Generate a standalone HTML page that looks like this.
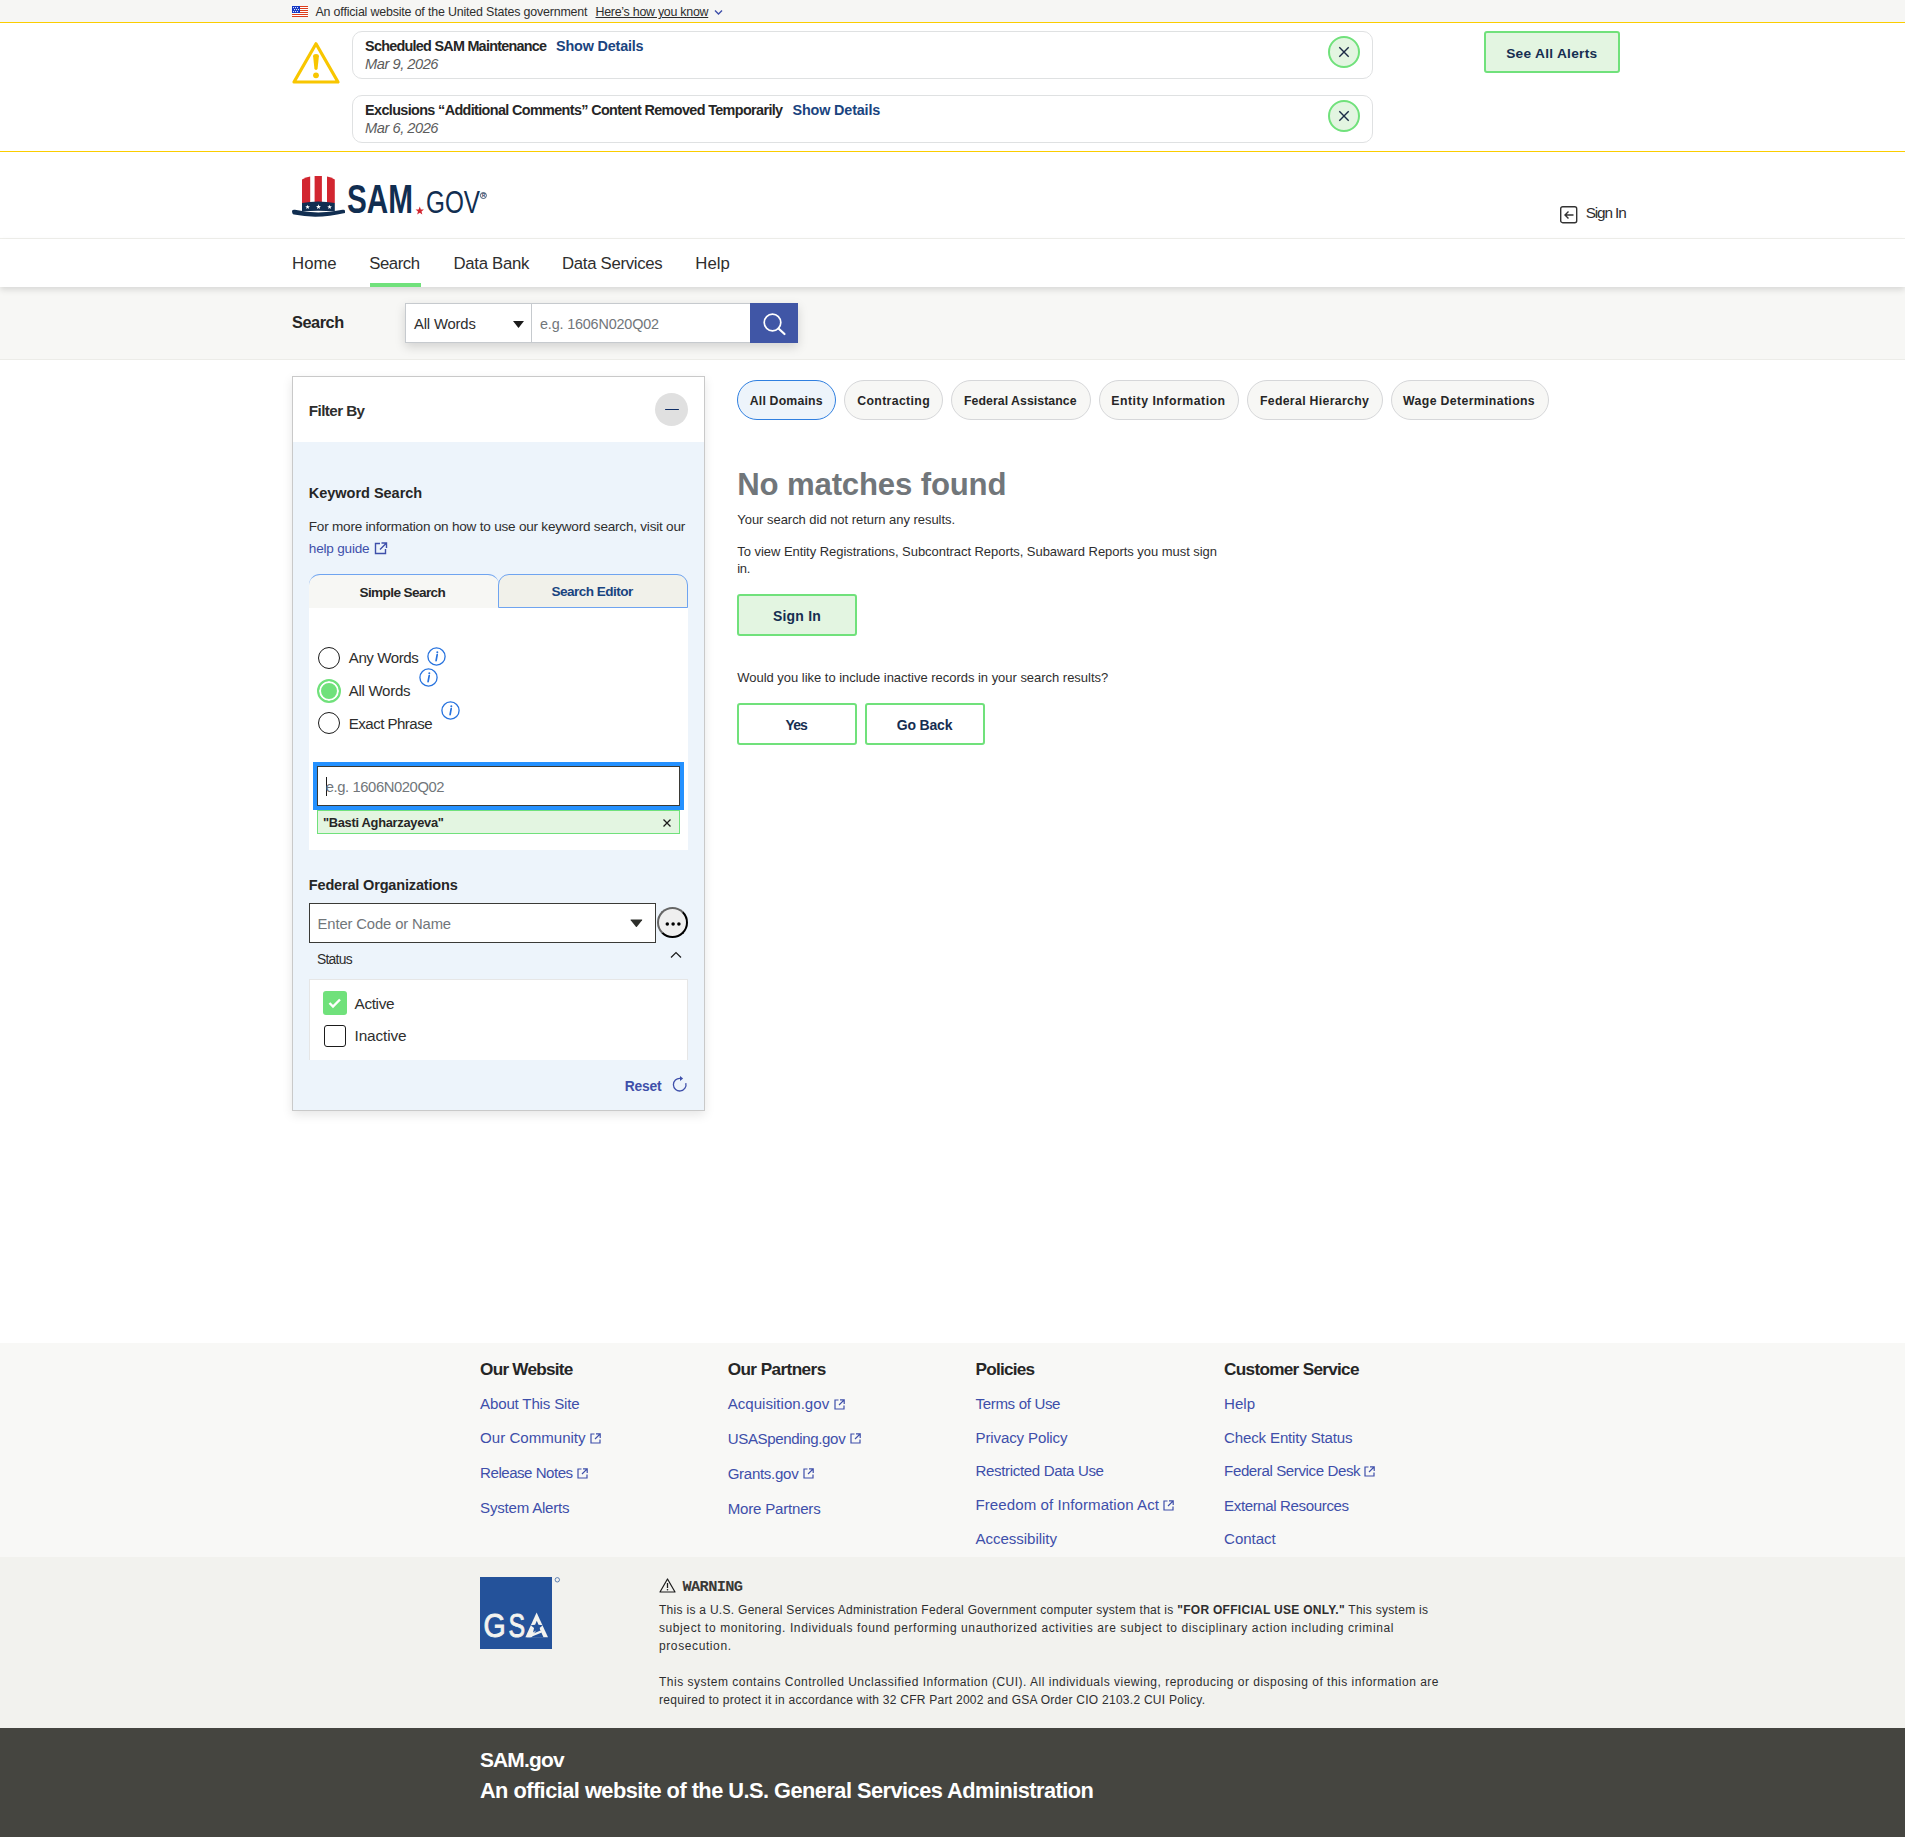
<!DOCTYPE html>
<html><head><meta charset="utf-8">
<style>
*{box-sizing:border-box;margin:0;padding:0}
html,body{width:1905px;height:1837px;overflow:hidden;background:#fff;font-family:"Liberation Sans",sans-serif;color:#1b1b1b}
.a{position:absolute}
.t{position:absolute;white-space:nowrap;line-height:1;z-index:5}
.card{left:352px;width:1021px;height:48px;border:1px solid #dfe1e2;border-radius:10px;background:#fff}
.xbtn{width:32px;height:32px;border-radius:50%;border:2px solid #70e17b;background:#e3f5e1}
.gbtn{background:#e3f5e1;border:2px solid #70e17b;border-radius:3px}
.obtn{background:#fff;border:2px solid #70e17b;border-radius:3px}
.pill{top:380px;height:40px;border-radius:20px;border:1px solid #d6d7d9;background:#f7f7f5}
</style></head><body>

<!-- gov banner -->
<div class="a" style="left:0;top:0;width:1905px;height:22px;background:#f6f6f4"></div>
<svg class="a" style="left:292px;top:6px" width="16" height="11" viewBox="0 0 16 11" shape-rendering="crispEdges"><rect width="16" height="11" fill="#fff"></rect><g fill="#dc3d1c"><rect y="0" width="16" height="1"></rect><rect y="2" width="16" height="1"></rect><rect y="4" width="16" height="1"></rect><rect y="6" width="16" height="1"></rect><rect y="8" width="16" height="1"></rect><rect y="10" width="16" height="1"></rect></g><rect width="8" height="7" fill="#1236c4"></rect><g fill="#fff" shape-rendering="auto"><circle cx="1.50" cy="1.6" r=".6"></circle><circle cx="3.50" cy="1.6" r=".6"></circle><circle cx="5.50" cy="1.6" r=".6"></circle><circle cx="2.50" cy="3.6" r=".6"></circle><circle cx="4.50" cy="3.6" r=".6"></circle><circle cx="6.50" cy="3.6" r=".6"></circle><circle cx="1.50" cy="5.6" r=".6"></circle><circle cx="3.50" cy="5.6" r=".6"></circle><circle cx="5.50" cy="5.6" r=".6"></circle></g></svg>
<svg class="a" style="left:714px;top:9px" width="9" height="7" viewBox="0 0 9 7"><path d="M1 1.5 L4.5 5 L8 1.5" stroke="#3e4faa" stroke-width="1.4" fill="none"></path></svg>

<!-- alerts -->
<div class="a" style="left:0;top:22px;width:1905px;height:130px;background:#fff;border-top:1px solid #fbcd00;border-bottom:1px solid #fbcd00"></div>
<svg class="a" style="left:291px;top:40px" width="50" height="46" viewBox="0 0 50 46">
  <path d="M25 3.8 L47 42 L3 42 Z" fill="none" stroke="#f8c600" stroke-width="3.2" stroke-linejoin="round"></path>
  <path d="M22.1 16.3 Q22.1 14 25 14 Q27.9 14 27.9 16.3 L26.6 28.6 Q26.4 29.9 25 29.9 Q23.6 29.9 23.4 28.6 Z" fill="#f8c600"></path>
  <circle cx="25" cy="35.3" r="2.9" fill="#f8c600"></circle>
</svg>
<div class="a card" style="top:31px"></div>
<div class="a card" style="top:95px"></div>
<div class="a xbtn" style="left:1328px;top:36px"><svg class="a" style="left:0;top:0" width="28" height="28" viewBox="0 0 28 28"><path d="M9.3 9.3 L18.7 18.7 M18.7 9.3 L9.3 18.7" stroke="#1c2b46" stroke-width="1.4"></path></svg></div>
<div class="a xbtn" style="left:1328px;top:100px"><svg class="a" style="left:0;top:0" width="28" height="28" viewBox="0 0 28 28"><path d="M9.3 9.3 L18.7 18.7 M18.7 9.3 L9.3 18.7" stroke="#1c2b46" stroke-width="1.4"></path></svg></div>
<div class="a gbtn" style="left:1484px;top:31px;width:136px;height:42px"></div>

<!-- header -->
<svg class="a" style="left:290px;top:174px" width="200" height="46" viewBox="0 0 200 46">
  <path d="M12 5.4 Q16 3.2 20.2 2.5 L20.2 29 L12 29 Z" fill="#d22630"></path>
  <path d="M24.6 2 L31.9 2 L31.9 29 L24.6 29 Z" fill="#d22630"></path>
  <path d="M37 2.5 Q41 3.2 44.8 5.4 L44.8 29 L37 29 Z" fill="#d22630"></path>
  <path d="M12 29 Q28 26 44.8 29 L44.8 37.5 Q28 36 12 37.5 Z" fill="#112e51"></path>
  <g fill="#fff"><path d="M17.60 30.70 L18.19 32.28 L19.88 32.36 L18.56 33.41 L19.01 35.04 L17.60 34.11 L16.19 35.04 L16.64 33.41 L15.32 32.36 L17.01 32.28 Z"></path><path d="M28.50 30.20 L29.14 31.92 L30.97 32.00 L29.54 33.14 L30.03 34.90 L28.50 33.89 L26.97 34.90 L27.46 33.14 L26.03 32.00 L27.86 31.92 Z"></path><path d="M39.60 30.70 L40.19 32.28 L41.88 32.36 L40.56 33.41 L41.01 35.04 L39.60 34.11 L38.19 35.04 L38.64 33.41 L37.32 32.36 L39.01 32.28 Z"></path></g>
  <path d="M2 36.8 Q3 35.3 5 35.8 Q28 41 52.5 35.8 Q55 35.3 55 37 L55 39 Q28 45.5 4 40.6 Q2 40.2 2 36.8 Z" fill="#112e51"></path>
  <text x="57" y="39" font-family="Liberation Sans" font-weight="bold" font-size="40" fill="#112e51" textLength="66" lengthAdjust="spacingAndGlyphs">SAM</text>
  <path d="M129.75 32.50 L130.84 35.42 L133.94 35.54 L131.50 37.46 L132.34 40.46 L129.75 38.75 L127.16 40.46 L128.00 37.46 L125.56 35.54 L128.66 35.42 Z" fill="#d22630"></path>
  <text x="136" y="39" font-family="Liberation Sans" font-size="31.5" fill="#112e51" textLength="54" lengthAdjust="spacingAndGlyphs">GOV</text>
  <circle cx="193.4" cy="21.5" r="3" fill="none" stroke="#112e51" stroke-width=".8"></circle>
  <text x="192" y="23.2" font-family="Liberation Sans" font-weight="bold" font-size="4.5" fill="#112e51">R</text>
</svg>
<svg class="a" style="left:1560px;top:206px" width="18" height="18" viewBox="0 0 18 18">
  <rect x=".7" y=".7" width="16" height="16" rx="2" fill="none" stroke="#333" stroke-width="1.4"></rect>
  <path d="M13.5 9 H5 M8.5 5.5 L5 9 L8.5 12.5" fill="none" stroke="#333" stroke-width="1.4"></path>
</svg>
<div class="a" style="left:0;top:238px;width:1905px;height:1px;background:#f0f0ec"></div>

<!-- nav -->
<div class="a" style="left:0;top:239px;width:1905px;height:48px;background:#fff;z-index:2;box-shadow:0 3px 6px rgba(0,0,0,0.12)"></div>
<div class="a" style="left:370px;top:283px;width:51px;height:4px;background:#70e17b;z-index:3"></div>

<!-- search bar -->
<div class="a" style="left:0;top:287px;width:1905px;height:73px;background:#f7f7f5;border-bottom:1px solid #ecece8"></div>
<div class="a" style="left:405px;top:303px;width:393px;height:40px;box-shadow:0 4px 10px rgba(0,0,0,0.15)"></div>
<div class="a" style="left:405px;top:303px;width:127px;height:40px;background:#fff;border:1px solid #c6cace"></div>
<svg class="a" style="left:513px;top:321px" width="12" height="8" viewBox="0 0 12 8"><path d="M0 0 H11 L5.5 7 Z" fill="#1b1b1b"></path></svg>
<div class="a" style="left:531px;top:303px;width:220px;height:40px;background:#fff;border:1px solid #c6cace"></div>
<div class="a" style="left:750px;top:303px;width:48px;height:40px;background:#4056a6"></div>
<svg class="a" style="left:760px;top:312px" width="28" height="24" viewBox="0 0 28 24">
  <circle cx="12.5" cy="10.5" r="8.3" fill="none" stroke="#fff" stroke-width="1.7"></circle>
  <path d="M18.5 16.5 L24.5 22" stroke="#fff" stroke-width="2.2" stroke-linecap="round"></path>
</svg>

<!-- filter panel -->
<div class="a" style="left:292px;top:376px;width:413px;height:735px;border:1px solid #c9c9c9;background:#edf4fb;box-shadow:0 4px 10px rgba(0,0,0,0.1)"></div>
<div class="a" style="left:293px;top:377px;width:411px;height:65px;background:#fff"></div>
<div class="a" style="left:655px;top:393px;width:33px;height:33px;border-radius:50%;background:#e0e0e0"></div>
<div class="a" style="left:665px;top:408.5px;width:14px;height:1.6px;border-radius:1px;background:#0f2e66"></div>
<svg class="a" style="left:374px;top:542px" width="14" height="13" viewBox="0 0 14 13">
  <path d="M6 1.5 H1.5 V11.5 H11.5 V7" fill="none" stroke="#3e4faa" stroke-width="1.4"></path>
  <path d="M7.5 1 H12.5 V6 M12.5 1 L6 7.5" fill="none" stroke="#3e4faa" stroke-width="1.4"></path>
</svg>
<!-- tabs -->
<div class="a" style="left:309px;top:574px;width:190px;height:34px;background:#f7f7f4;border-top:1px solid #6fa4f0;border-radius:11px 11px 0 0"></div>
<div class="a" style="left:498px;top:574px;width:190px;height:34px;background:#f1f1ea;border:1px solid #6fa4f0;border-radius:11px 11px 0 0"></div>
<div class="a" style="left:309px;top:608px;width:379px;height:242px;background:#fff"></div>
<!-- radios -->
<div class="a" style="left:318px;top:647px;width:22px;height:22px;border-radius:50%;border:1.5px solid #1b1b1b;background:#fff"></div>
<div class="a" style="left:317px;top:679px;width:24px;height:24px;border-radius:50%;border:2.5px solid #70e17b;background:#70e17b;box-shadow:inset 0 0 0 2px #fff"></div>
<div class="a" style="left:318px;top:712px;width:22px;height:22px;border-radius:50%;border:1.5px solid #1b1b1b;background:#fff"></div>
<svg class="a" style="left:427px;top:647px" width="19" height="19" viewBox="0 0 19 19"><circle cx="9.5" cy="9.5" r="8.6" fill="none" stroke="#2672de" stroke-width="1.3"></circle><circle cx="10.3" cy="5.3" r="1" fill="#2672de"></circle><path d="M10.2 7.6 L9.1 13.6" stroke="#2672de" stroke-width="1.7" stroke-linecap="round"></path></svg>
<svg class="a" style="left:419px;top:668px" width="19" height="19" viewBox="0 0 19 19"><circle cx="9.5" cy="9.5" r="8.6" fill="none" stroke="#2672de" stroke-width="1.3"></circle><circle cx="10.3" cy="5.3" r="1" fill="#2672de"></circle><path d="M10.2 7.6 L9.1 13.6" stroke="#2672de" stroke-width="1.7" stroke-linecap="round"></path></svg>
<svg class="a" style="left:441px;top:701px" width="19" height="19" viewBox="0 0 19 19"><circle cx="9.5" cy="9.5" r="8.6" fill="none" stroke="#2672de" stroke-width="1.3"></circle><circle cx="10.3" cy="5.3" r="1" fill="#2672de"></circle><path d="M10.2 7.6 L9.1 13.6" stroke="#2672de" stroke-width="1.7" stroke-linecap="round"></path></svg>
<!-- keyword input -->
<div class="a" style="left:313px;top:762px;width:371px;height:48px;background:#2491ff"></div>
<div class="a" style="left:317px;top:766px;width:363px;height:40px;background:#fff;border:1px solid #3a3a36"></div>
<div class="a" style="left:325.5px;top:777px;width:1px;height:19px;background:#1b1b1b"></div>
<div class="a" style="left:317px;top:810px;width:363px;height:24px;background:#e3f5e1;border:1px solid #70e17b"></div>
<svg class="a" style="left:662px;top:818px" width="10" height="10" viewBox="0 0 10 10"><path d="M1.5 1.5 L8.5 8.5 M8.5 1.5 L1.5 8.5" stroke="#1b1b1b" stroke-width="1.3"></path></svg>
<!-- fed orgs -->
<div class="a" style="left:309px;top:903px;width:347px;height:40px;background:#fff;border:1px solid #3a3a36"></div>
<svg class="a" style="left:629.5px;top:918.5px" width="13" height="9" viewBox="0 0 13 9"><path d="M1 .6 H11.8 Q12.6 .6 12.1 1.3 L6.9 7.8 Q6.4 8.4 5.9 7.8 L.7 1.3 Q.2 .6 1 .6 Z" fill="#2d2e2a"></path></svg>
<div class="a" style="left:657px;top:907px;width:31px;height:31px;border-radius:50%;border:2px solid;border-color:#666 #000 #000 #666;background:#efefef"></div>
<svg class="a" style="left:662px;top:919px" width="21" height="9" viewBox="0 0 21 9"><circle cx="5.3" cy="5.1" r="1.75" fill="#000"></circle><circle cx="11.1" cy="5.1" r="1.75" fill="#000"></circle><circle cx="16.9" cy="5.1" r="1.75" fill="#000"></circle></svg>
<svg class="a" style="left:670px;top:951px" width="12" height="8" viewBox="0 0 12 8"><path d="M1 6.5 L6 1.5 L11 6.5" fill="none" stroke="#1b1b1b" stroke-width="1.2"></path></svg>
<div class="a" style="left:309px;top:979px;width:379px;height:81px;background:#fff;border:1px solid #e6e6e6;border-bottom:none"></div>
<div class="a" style="left:323px;top:991px;width:24px;height:24px;border-radius:3px;background:#70e17b"></div>
<svg class="a" style="left:327px;top:996px" width="16" height="14" viewBox="0 0 16 14"><path d="M2.5 7 L6 10.5 L13 3.5" fill="none" stroke="#fff" stroke-width="2.4"></path></svg>
<div class="a" style="left:324px;top:1025px;width:22px;height:22px;border-radius:3px;border:1.5px solid #1b1b1b;background:#fff"></div>
<svg class="a" style="left:671px;top:1075px" width="18" height="18" viewBox="0 0 18 18"><path d="M14.8 8.1 A6.3 6.3 0 1 1 9.3 3.42" fill="none" stroke="#3e4faa" stroke-width="1.3"></path><path d="M9 1.1 L12.1 3.4 L9 5.9 Z" fill="#3e4faa"></path></svg>

<!-- results -->
<div class="a pill" style="left:737px;width:99px;border:1.5px solid #2f7fe0;background:#edf4fb"></div>
<div class="a pill" style="left:844px;width:99px"></div>
<div class="a pill" style="left:951px;width:140px"></div>
<div class="a pill" style="left:1099px;width:140px"></div>
<div class="a pill" style="left:1247px;width:136px"></div>
<div class="a pill" style="left:1391px;width:158px"></div>
<div class="a gbtn" style="left:737px;top:594px;width:120px;height:42px"></div>
<div class="a obtn" style="left:737px;top:703px;width:120px;height:42px"></div>
<div class="a obtn" style="left:865px;top:703px;width:120px;height:42px"></div>

<!-- footer -->
<div class="a" style="left:0;top:1343px;width:1905px;height:214px;background:#f8f8f6"></div>
<div class="a" style="left:0;top:1557px;width:1905px;height:171px;background:#f2f2ee"></div>
<div class="a" style="left:0;top:1728px;width:1905px;height:109px;background:#454540"></div>
<svg class="a" style="left:589.5px;top:1432.5px" width="11" height="11" viewBox="0 0 11 11"><path d="M4.5 1 H1 V10 H10 V6.5" fill="none" stroke="#3e4faa" stroke-width="1.2"></path><path d="M6 .8 H10.2 V5 M10.2 .8 L5 6" fill="none" stroke="#3e4faa" stroke-width="1.2"></path></svg>
<svg class="a" style="left:576.5px;top:1467.5px" width="11" height="11" viewBox="0 0 11 11"><path d="M4.5 1 H1 V10 H10 V6.5" fill="none" stroke="#3e4faa" stroke-width="1.2"></path><path d="M6 .8 H10.2 V5 M10.2 .8 L5 6" fill="none" stroke="#3e4faa" stroke-width="1.2"></path></svg>
<svg class="a" style="left:833.5px;top:1398.5px" width="11" height="11" viewBox="0 0 11 11"><path d="M4.5 1 H1 V10 H10 V6.5" fill="none" stroke="#3e4faa" stroke-width="1.2"></path><path d="M6 .8 H10.2 V5 M10.2 .8 L5 6" fill="none" stroke="#3e4faa" stroke-width="1.2"></path></svg>
<svg class="a" style="left:850px;top:1433px" width="11" height="11" viewBox="0 0 11 11"><path d="M4.5 1 H1 V10 H10 V6.5" fill="none" stroke="#3e4faa" stroke-width="1.2"></path><path d="M6 .8 H10.2 V5 M10.2 .8 L5 6" fill="none" stroke="#3e4faa" stroke-width="1.2"></path></svg>
<svg class="a" style="left:803px;top:1468px" width="11" height="11" viewBox="0 0 11 11"><path d="M4.5 1 H1 V10 H10 V6.5" fill="none" stroke="#3e4faa" stroke-width="1.2"></path><path d="M6 .8 H10.2 V5 M10.2 .8 L5 6" fill="none" stroke="#3e4faa" stroke-width="1.2"></path></svg>
<svg class="a" style="left:1162.5px;top:1499.5px" width="11" height="11" viewBox="0 0 11 11"><path d="M4.5 1 H1 V10 H10 V6.5" fill="none" stroke="#3e4faa" stroke-width="1.2"></path><path d="M6 .8 H10.2 V5 M10.2 .8 L5 6" fill="none" stroke="#3e4faa" stroke-width="1.2"></path></svg>
<svg class="a" style="left:1364px;top:1466px" width="11" height="11" viewBox="0 0 11 11"><path d="M4.5 1 H1 V10 H10 V6.5" fill="none" stroke="#3e4faa" stroke-width="1.2"></path><path d="M6 .8 H10.2 V5 M10.2 .8 L5 6" fill="none" stroke="#3e4faa" stroke-width="1.2"></path></svg>

<svg class="a" style="left:480px;top:1577px" width="84" height="73" viewBox="0 0 84 73">
  <rect x="0" y="0" width="72" height="72" fill="#24529a"></rect>
  <text x="3.6" y="60.3" font-family="Liberation Sans" font-size="34" fill="#f3f3ef" stroke="#f3f3ef" stroke-width="0.9" textLength="22.2" lengthAdjust="spacingAndGlyphs">G</text>
  <text x="28.4" y="60.3" font-family="Liberation Sans" font-size="34" fill="#f3f3ef" stroke="#f3f3ef" stroke-width="0.9" textLength="16.6" lengthAdjust="spacingAndGlyphs">S</text>
  <path d="M56.6 35.5 L68 60.3 L45.4 60.3 Z" fill="#f3f3ef"></path>
  <path d="M51.5 60.4 L63.6 60.4 L58.6 49.5 Z" fill="#24529a"></path>
  <path d="M56.80 43.80 L58.50 47.85 L62.89 48.22 L59.56 51.10 L60.56 55.38 L56.80 53.10 L53.04 55.38 L54.04 51.10 L50.71 48.22 L55.10 47.85 Z" fill="#24529a"></path>
  <path d="M46.5 60.3 Q53 56.5 60.5 53.6 L61.8 55.5 Q54 58.5 50.5 60.3 Z" fill="#f3f3ef"></path>
  <circle cx="77.3" cy="2.8" r="2.2" fill="none" stroke="#24529a" stroke-width=".7"></circle>
</svg>
<svg class="a" style="left:659px;top:1578px" width="17" height="15" viewBox="0 0 17 15"><path d="M8.5 1 L16 14 H1 Z" fill="none" stroke="#1b1b1b" stroke-width="1.2" stroke-linejoin="round"></path><path d="M8.5 5 V10" stroke="#1b1b1b" stroke-width="1.3"></path><circle cx="8.5" cy="11.8" r=".8" fill="#1b1b1b"></circle></svg>

<div class="t" style="left: 315.5px; top: 6px; font-size: 12.43px; color: rgb(46, 46, 46); letter-spacing: -0.176px;">An official website of the United States government</div>
<div class="t" style="left: 595.5px; top: 6px; font-size: 12.43px; color: rgb(46, 46, 46); text-decoration: underline; letter-spacing: -0.269px;">Here’s how you know</div>
<div class="t" style="left: 365.1px; top: 39px; font-size: 14.39px; font-weight: bold; color: rgb(38, 38, 38); letter-spacing: -0.738px;">Scheduled SAM Maintenance</div>
<div class="t" style="left: 556.1px; top: 39px; font-size: 14.39px; font-weight: bold; color: rgb(26, 68, 128); letter-spacing: -0.179px;">Show Details</div>
<div class="t" style="left: 365.1px; top: 57px; font-size: 14.66px; font-style: italic; color: rgb(92, 92, 92); letter-spacing: -0.482px;">Mar 9, 2026</div>
<div class="t" style="left: 365.1px; top: 103px; font-size: 14.39px; font-weight: bold; color: rgb(38, 38, 38); letter-spacing: -0.627px;">Exclusions “Additional Comments” Content Removed Temporarily</div>
<div class="t" style="left: 792.5px; top: 103px; font-size: 14.39px; font-weight: bold; color: rgb(26, 68, 128); letter-spacing: -0.152px;">Show Details</div>
<div class="t" style="left: 365.1px; top: 121px; font-size: 14.66px; font-style: italic; color: rgb(92, 92, 92); letter-spacing: -0.482px;">Mar 6, 2026</div>
<div class="t" style="left: 1506.2px; top: 47px; font-size: 13.69px; font-weight: bold; color: rgb(22, 46, 81); letter-spacing: 0.29px;">See All Alerts</div>
<div class="t" style="left: 1585.7px; top: 205px; font-size: 15.36px; color: rgb(46, 46, 46); letter-spacing: -1.138px;">Sign In</div>
<div class="t" style="left: 292.1px; top: 256px; font-size: 16.76px; color: rgb(46, 46, 46); letter-spacing: -0.029px;">Home</div>
<div class="t" style="left: 369.3px; top: 256px; font-size: 16.76px; color: rgb(46, 46, 46); letter-spacing: -0.476px;">Search</div>
<div class="t" style="left: 453.4px; top: 256px; font-size: 16.76px; color: rgb(46, 46, 46); letter-spacing: -0.277px;">Data Bank</div>
<div class="t" style="left: 562px; top: 256px; font-size: 16.76px; color: rgb(46, 46, 46); letter-spacing: -0.297px;">Data Services</div>
<div class="t" style="left: 695.3px; top: 256px; font-size: 16.76px; color: rgb(46, 46, 46); letter-spacing: 0.049px;">Help</div>
<div class="t" style="left: 292px; top: 314px; font-size: 16.34px; font-weight: bold; color: rgb(38, 38, 38); letter-spacing: -0.454px;">Search</div>
<div class="t" style="left: 414px; top: 317px; font-size: 14.8px; color: rgb(46, 46, 46); letter-spacing: -0.156px;">All Words</div>
<div class="t" style="left: 540px; top: 317px; font-size: 14.39px; color: rgb(113, 118, 122); letter-spacing: -0.167px;">e.g. 1606N020Q02</div>
<div class="t" style="left: 308.8px; top: 403px; font-size: 15.22px; color: rgb(46, 46, 46); font-weight: 600; letter-spacing: -0.586px;">Filter By</div>
<div class="t" style="left: 308.8px; top: 486px; font-size: 14.53px; font-weight: bold; color: rgb(38, 38, 38); letter-spacing: -0.028px;">Keyword Search</div>
<div class="t" style="left: 308.8px; top: 520px; font-size: 13.55px; color: rgb(46, 46, 46); letter-spacing: -0.215px;">For more information on how to use our keyword search, visit our</div>
<div class="t" style="left: 308.8px; top: 542px; font-size: 13.55px; color: rgb(62, 79, 170); letter-spacing: -0.192px;">help guide</div>
<div class="t" style="left: 359.5px; top: 586px; font-size: 13.55px; font-weight: bold; color: rgb(38, 38, 38); letter-spacing: -0.59px;">Simple Search</div>
<div class="t" style="left: 551.5px; top: 585px; font-size: 13.55px; font-weight: bold; color: rgb(26, 68, 128); letter-spacing: -0.524px;">Search Editor</div>
<div class="t" style="left: 348.8px; top: 650px; font-size: 15.08px; color: rgb(46, 46, 46); letter-spacing: -0.434px;">Any Words</div>
<div class="t" style="left: 348.8px; top: 683px; font-size: 15.08px; color: rgb(46, 46, 46); letter-spacing: -0.319px;">All Words</div>
<div class="t" style="left: 348.8px; top: 716px; font-size: 15.08px; color: rgb(46, 46, 46); letter-spacing: -0.535px;">Exact Phrase</div>
<div class="t" style="left: 325.7px; top: 780px; font-size: 14.8px; color: rgb(113, 118, 122); letter-spacing: -0.411px;">e.g. 1606N020Q02</div>
<div class="t" style="left: 322.9px; top: 817px; font-size: 12.85px; font-weight: bold; color: rgb(38, 38, 38); letter-spacing: -0.274px;">"Basti Agharzayeva"</div>
<div class="t" style="left: 308.8px; top: 878px; font-size: 14.53px; font-weight: bold; color: rgb(38, 38, 38); letter-spacing: -0.173px;">Federal Organizations</div>
<div class="t" style="left: 317.6px; top: 917px; font-size: 14.8px; color: rgb(113, 118, 122); letter-spacing: -0.13px;">Enter Code or Name</div>
<div class="t" style="left: 316.9px; top: 953px; font-size: 13.83px; color: rgb(46, 46, 46); letter-spacing: -0.681px;">Status</div>
<div class="t" style="left: 354.5px; top: 996px; font-size: 15.36px; color: rgb(46, 46, 46); letter-spacing: -0.366px;">Active</div>
<div class="t" style="left: 354.5px; top: 1028px; font-size: 15.36px; color: rgb(46, 46, 46); letter-spacing: -0.134px;">Inactive</div>
<div class="t" style="left: 624.8px; top: 1080px; font-size: 13.83px; font-weight: bold; color: rgb(62, 79, 170); letter-spacing: -0.193px;">Reset</div>
<div class="t" style="left: 749.8px; top: 395px; font-size: 12.29px; font-weight: bold; color: rgb(38, 38, 38); letter-spacing: 0.172px;">All Domains</div>
<div class="t" style="left: 857.2px; top: 395px; font-size: 12.29px; font-weight: bold; color: rgb(38, 38, 38); letter-spacing: 0.358px;">Contracting</div>
<div class="t" style="left: 964px; top: 395px; font-size: 12.29px; font-weight: bold; color: rgb(38, 38, 38); letter-spacing: 0.059px;">Federal Assistance</div>
<div class="t" style="left: 1111.3px; top: 395px; font-size: 12.29px; font-weight: bold; color: rgb(38, 38, 38); letter-spacing: 0.513px;">Entity Information</div>
<div class="t" style="left: 1259.9px; top: 395px; font-size: 12.29px; font-weight: bold; color: rgb(38, 38, 38); letter-spacing: 0.327px;">Federal Hierarchy</div>
<div class="t" style="left: 1403.1px; top: 395px; font-size: 12.29px; font-weight: bold; color: rgb(38, 38, 38); letter-spacing: 0.361px;">Wage Determinations</div>
<div class="t" style="left: 737.3px; top: 469px; font-size: 31.15px; font-weight: bold; color: rgb(113, 118, 122); letter-spacing: -0.163px;">No matches found</div>
<div class="t" style="left: 737.3px; top: 513px; font-size: 12.99px; color: rgb(46, 46, 46); letter-spacing: -0.03px;">Your search did not return any results.</div>
<div class="t" style="left: 737.3px; top: 545px; font-size: 12.99px; color: rgb(46, 46, 46); letter-spacing: -0.039px;">To view Entity Registrations, Subcontract Reports, Subaward Reports you must sign</div>
<div class="t" style="left: 737.3px; top: 562px; font-size: 12.99px; color: rgb(46, 46, 46); letter-spacing: -0.359px;">in.</div>
<div class="t" style="left: 773px; top: 610px; font-size: 13.97px; font-weight: bold; color: rgb(22, 46, 81); letter-spacing: 0.206px;">Sign In</div>
<div class="t" style="left: 737.3px; top: 671px; font-size: 12.99px; color: rgb(46, 46, 46); letter-spacing: -0.02px;">Would you like to include inactive records in your search results?</div>
<div class="t" style="left: 785.5px; top: 719px; font-size: 13.97px; font-weight: bold; color: rgb(22, 46, 81); letter-spacing: -0.847px;">Yes</div>
<div class="t" style="left: 896.7px; top: 719px; font-size: 13.97px; font-weight: bold; color: rgb(22, 46, 81); letter-spacing: -0.148px;">Go Back</div>
<div class="t" style="left: 480.1px; top: 1361px; font-size: 17.18px; font-weight: bold; color: rgb(38, 38, 38); letter-spacing: -0.763px;">Our Website</div>
<div class="t" style="left: 727.7px; top: 1361px; font-size: 17.18px; font-weight: bold; color: rgb(38, 38, 38); letter-spacing: -0.589px;">Our Partners</div>
<div class="t" style="left: 975.5px; top: 1361px; font-size: 17.18px; font-weight: bold; color: rgb(38, 38, 38); letter-spacing: -0.772px;">Policies</div>
<div class="t" style="left: 1224.1px; top: 1361px; font-size: 17.18px; font-weight: bold; color: rgb(38, 38, 38); letter-spacing: -0.709px;">Customer Service</div>
<div class="t" style="left: 480.1px; top: 1396px; font-size: 15.08px; color: rgb(62, 79, 170); letter-spacing: -0.177px;">About This Site</div>
<div class="t" style="left: 480.1px; top: 1430px; font-size: 15.08px; color: rgb(62, 79, 170); letter-spacing: -0.007px;">Our Community</div>
<div class="t" style="left: 480.1px; top: 1465px; font-size: 15.08px; color: rgb(62, 79, 170); letter-spacing: -0.492px;">Release Notes</div>
<div class="t" style="left: 480.1px; top: 1500px; font-size: 15.08px; color: rgb(62, 79, 170); letter-spacing: -0.223px;">System Alerts</div>
<div class="t" style="left: 727.7px; top: 1396px; font-size: 15.08px; color: rgb(62, 79, 170); letter-spacing: 0.006px;">Acquisition.gov</div>
<div class="t" style="left: 727.7px; top: 1431px; font-size: 15.08px; color: rgb(62, 79, 170); letter-spacing: -0.374px;">USASpending.gov</div>
<div class="t" style="left: 727.7px; top: 1466px; font-size: 15.08px; color: rgb(62, 79, 170); letter-spacing: -0.306px;">Grants.gov</div>
<div class="t" style="left: 727.7px; top: 1501px; font-size: 15.08px; color: rgb(62, 79, 170); letter-spacing: -0.211px;">More Partners</div>
<div class="t" style="left: 975.5px; top: 1396px; font-size: 15.08px; color: rgb(62, 79, 170); letter-spacing: -0.347px;">Terms of Use</div>
<div class="t" style="left: 975.5px; top: 1430px; font-size: 15.08px; color: rgb(62, 79, 170); letter-spacing: -0.142px;">Privacy Policy</div>
<div class="t" style="left: 975.5px; top: 1463px; font-size: 15.08px; color: rgb(62, 79, 170); letter-spacing: -0.357px;">Restricted Data Use</div>
<div class="t" style="left: 975.5px; top: 1497px; font-size: 15.08px; color: rgb(62, 79, 170); letter-spacing: 0.066px;">Freedom of Information Act</div>
<div class="t" style="left: 975.5px; top: 1531px; font-size: 15.08px; color: rgb(62, 79, 170); letter-spacing: -0.052px;">Accessibility</div>
<div class="t" style="left: 1224.1px; top: 1396px; font-size: 15.08px; color: rgb(62, 79, 170); letter-spacing: -0.005px;">Help</div>
<div class="t" style="left: 1224.1px; top: 1430px; font-size: 15.08px; color: rgb(62, 79, 170); letter-spacing: -0.171px;">Check Entity Status</div>
<div class="t" style="left: 1224.1px; top: 1463px; font-size: 15.08px; color: rgb(62, 79, 170); letter-spacing: -0.402px;">Federal Service Desk</div>
<div class="t" style="left: 1224.1px; top: 1498px; font-size: 15.08px; color: rgb(62, 79, 170); letter-spacing: -0.387px;">External Resources</div>
<div class="t" style="left: 1224.1px; top: 1531px; font-size: 15.08px; color: rgb(62, 79, 170); letter-spacing: -0.078px;">Contact</div>
<div class="t" style="left: 682.5px; top: 1580px; font-size: 15.36px; font-weight: bold; color: rgb(58, 58, 55); font-family: &quot;Liberation Mono&quot;, monospace; letter-spacing: -0.672px;">WARNING</div>
<div class="t" style="left: 659px; top: 1604px; font-size: 12.01px; color: rgb(46, 46, 46); letter-spacing: 0.289px;">This is a U.S. General Services Administration Federal Government computer system that is <b>"FOR OFFICIAL USE ONLY."</b> This system is</div>
<div class="t" style="left: 659px; top: 1622px; font-size: 12.01px; color: rgb(46, 46, 46); letter-spacing: 0.589px;">subject to monitoring. Individuals found performing unauthorized activities are subject to disciplinary action including criminal</div>
<div class="t" style="left: 659px; top: 1640px; font-size: 12.01px; color: rgb(46, 46, 46); letter-spacing: 0.602px;">prosecution.</div>
<div class="t" style="left: 659px; top: 1676px; font-size: 12.01px; color: rgb(46, 46, 46); letter-spacing: 0.494px;">This system contains Controlled Unclassified Information (CUI). All individuals viewing, reproducing or disposing of this information are</div>
<div class="t" style="left: 659px; top: 1694px; font-size: 12.01px; color: rgb(46, 46, 46); letter-spacing: 0.262px;">required to protect it in accordance with 32 CFR Part 2002 and GSA Order CIO 2103.2 CUI Policy.</div>
<div class="t" style="left: 479.9px; top: 1750px; font-size: 20.95px; font-weight: bold; color: rgb(255, 255, 255); letter-spacing: -0.813px;">SAM.gov</div>
<div class="t" style="left: 479.9px; top: 1780px; font-size: 21.79px; font-weight: bold; color: rgb(255, 255, 255); letter-spacing: -0.528px;">An official website of the U.S. General Services Administration</div>

</body></html>
